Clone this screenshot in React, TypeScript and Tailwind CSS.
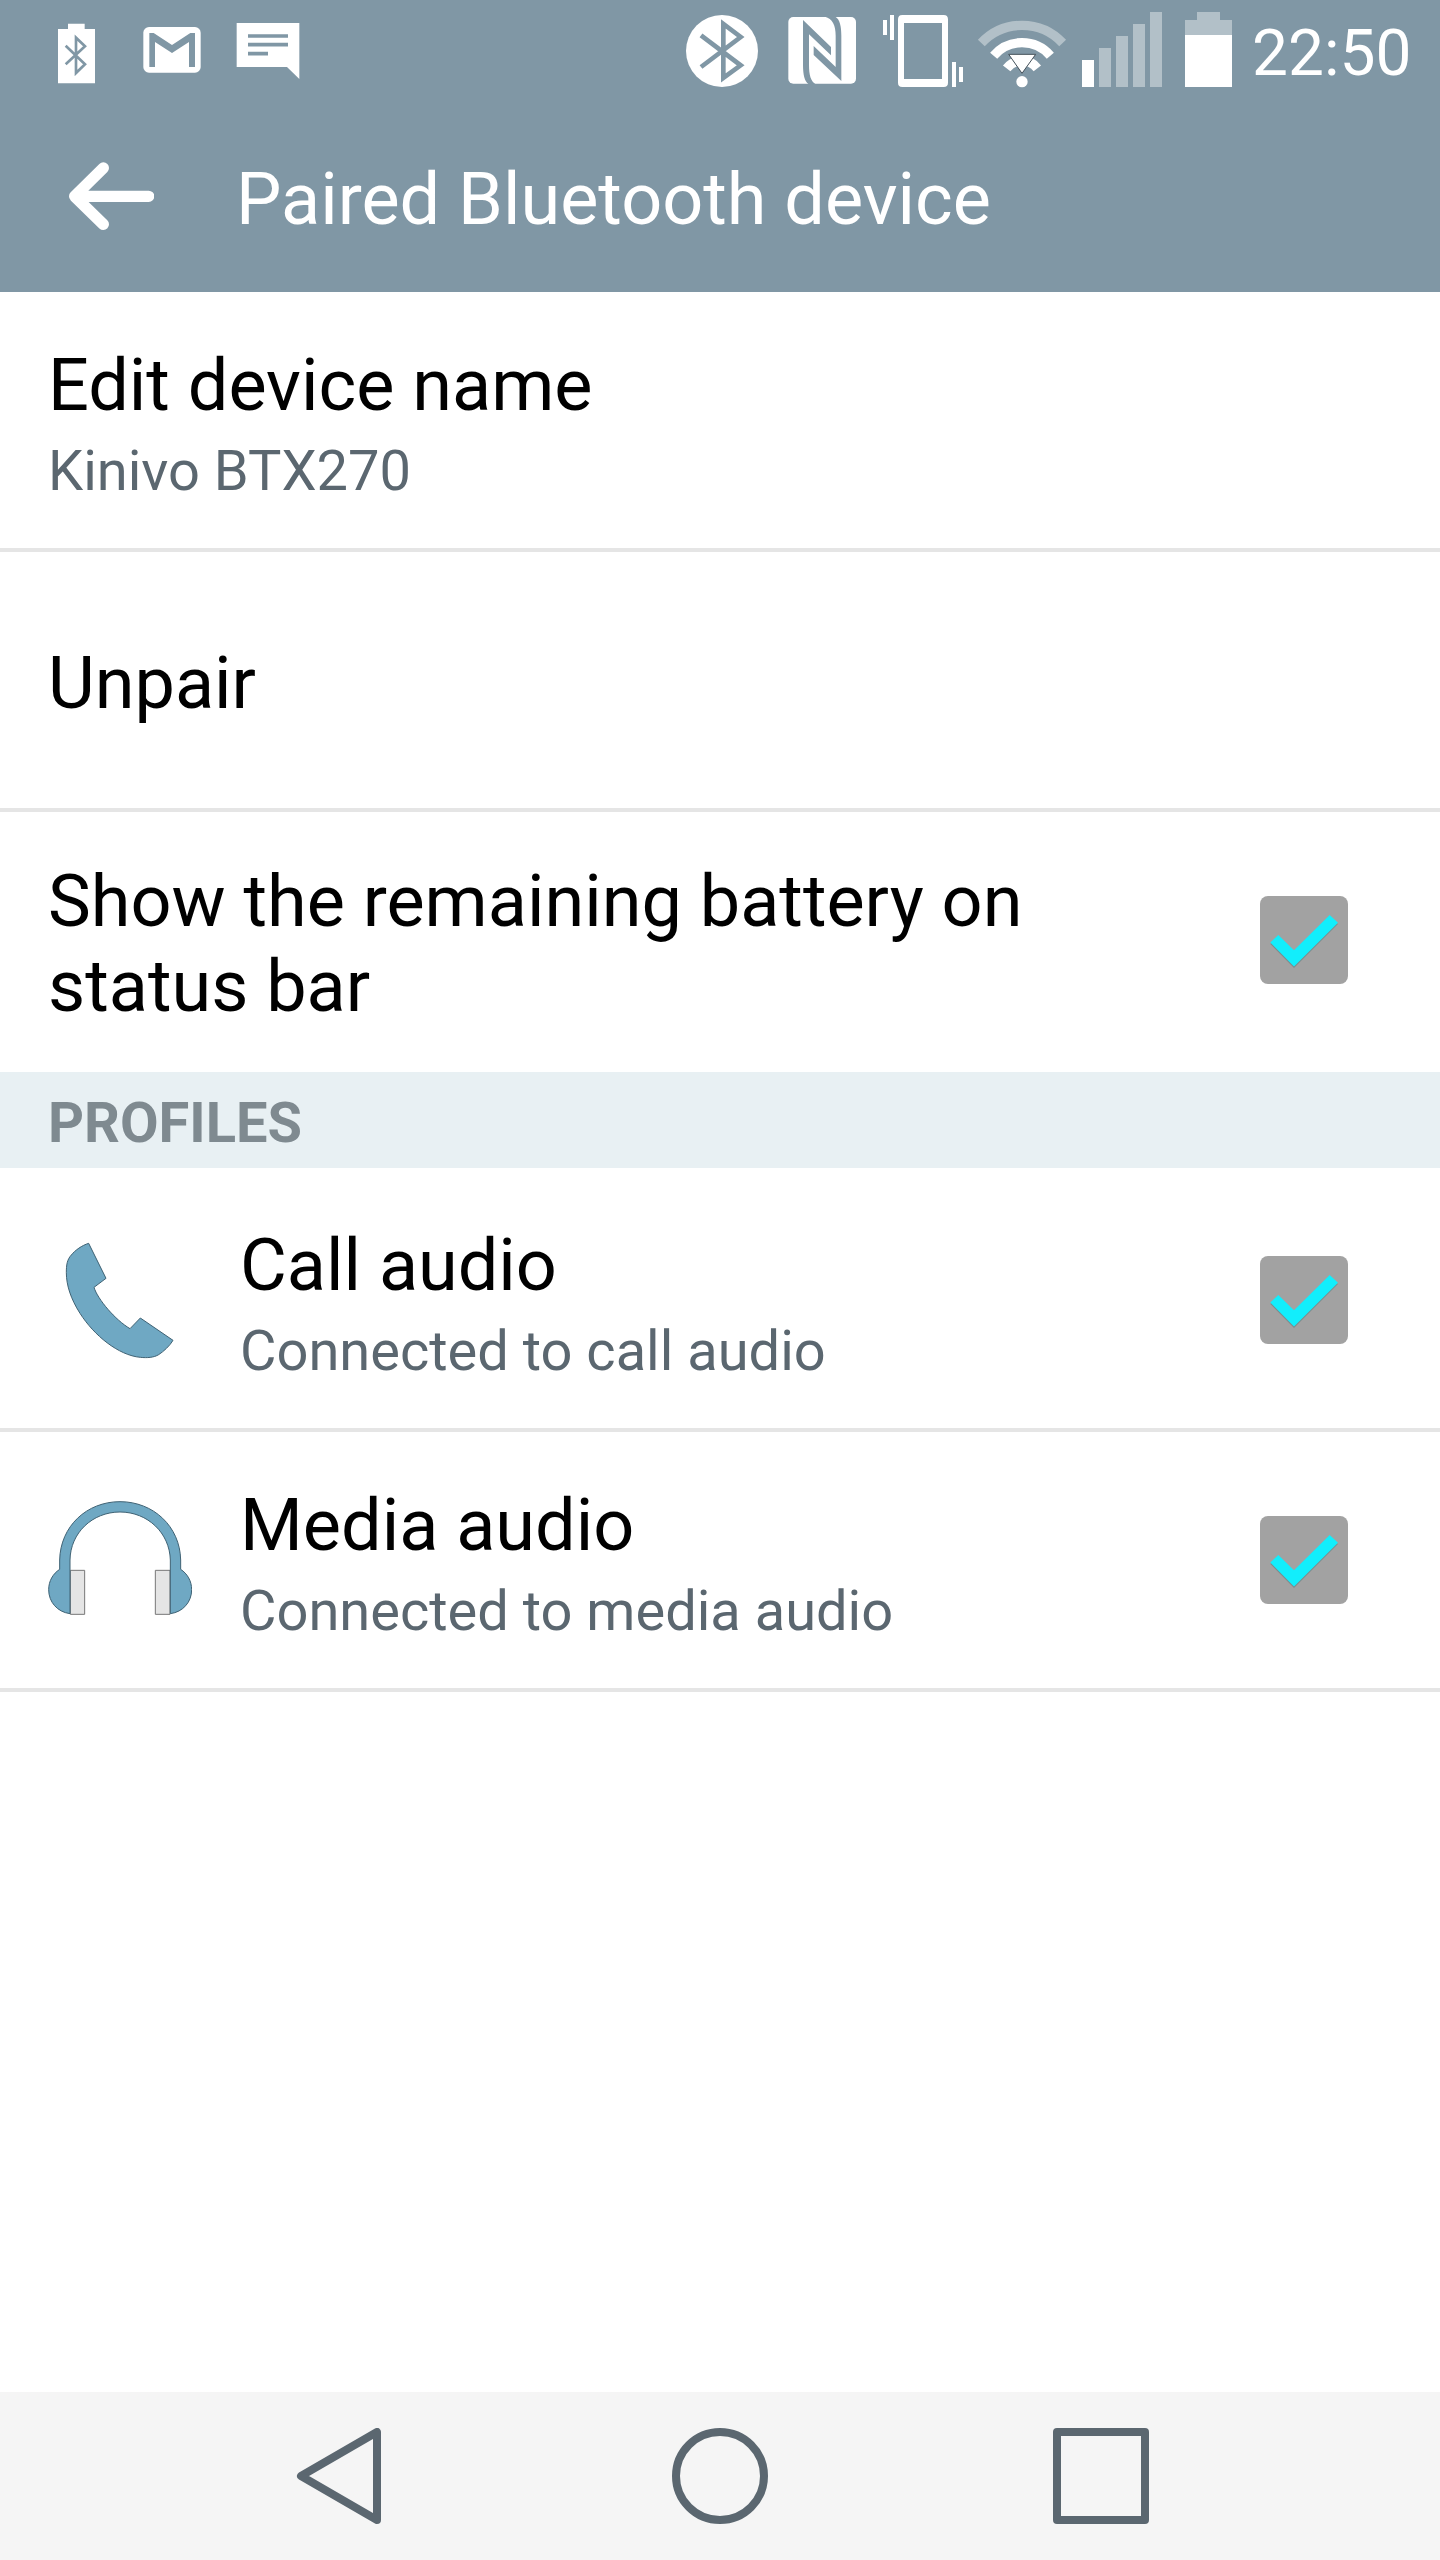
import type { ReactNode } from 'react';

const BAR = '#8097a5';

function StatusBar() {
  return (
    <div className="flex h-[100px] items-start pl-[58px]">
      {/* Notifications */}
      <svg className="h-[100px] w-[37px] shrink-0" viewBox="54 0 111 300">
        <path d="M54 87H84V71H134V87H165V250H54Z" fill="#fff" />
        <path d="M77 137L135 193L108 219V113L135 139L77 193" fill="none" stroke={BAR} strokeWidth="8" />
      </svg>
      <svg className="ml-12 h-[100px] w-[58px] shrink-0" viewBox="309 0 174 300">
        <rect x="310" y="81" width="172" height="137" rx="17" fill="#fff" />
        <path d="M328 201V99H341L396 135L451 99H465V201H447V126L396 159L345 126V201Z" fill={BAR} />
      </svg>
      <svg className="ml-[35px] h-[100px] w-16 shrink-0" viewBox="588 0 192 300">
        <path d="M590 69H778V237L741 201H590Z" fill="#fff" />
        <path d="M624 108H744M624 134H744M624 161H684" stroke={BAR} strokeWidth="11" />
      </svg>

      {/* System icons */}
      <svg className="ml-[386px] h-[100px] w-[72px] shrink-0" viewBox="48 0 216 300">
        <circle cx="156" cy="153" r="108" fill="#fff" />
        <path d="M93 106L212 196L160 234V72L212 111L93 201" fill="none" stroke={BAR} strokeWidth="14" />
      </svg>
      <svg className="ml-[30px] h-[100px] w-[68px] shrink-0" viewBox="354 0 204 300">
        <rect x="355" y="51" width="203" height="200" rx="15" fill="#fff" />
        <path d="M399 60L483 141V166L417 103V195C417 225 422 243 436 252H415C404 244 399 225 399 195Z" fill={BAR} />
        <path d="M514 243L431 165V138L497 201V107C497 75 487 56 465 50H496C510 58 514 80 514 107Z" fill={BAR} />
      </svg>
      <svg className="ml-[27px] h-[100px] w-20 shrink-0" viewBox="639 0 240 300">
        <path
          d="M697 45H821Q834 45 834 58V248Q834 261 821 261H697Q684 261 684 248V58Q684 45 697 45ZM702 69V237H816V69Z"
          fill="#fff"
          fillRule="evenodd"
        />
        <path d="M639 60H651V105H639ZM660 45H672V120H660ZM846 186H858V261H846ZM867 201H879V246H867Z" fill="#fff" />
      </svg>
      <svg className="ml-3.5 h-[100px] w-[90px] shrink-0" viewBox="51 0 270 300">
        <path d="M64 129A167 167 0 0 1 308 129" fill="none" stroke="#b2c0c8" strokeWidth="28" />
        <path d="M101 167A112 112 0 0 1 271 167" fill="none" stroke="#fff" strokeWidth="28" />
        <path d="M140 205A58 58 0 0 1 232 205" fill="none" stroke="#fff" strokeWidth="28" />
        <path d="M146 163H227L186 220Z" fill="#fff" stroke="#44515a" strokeWidth="3" strokeLinejoin="round" />
        <circle cx="186" cy="245" r="17" fill="#fff" />
      </svg>
      <svg className="ml-[15px] h-[100px] w-20 shrink-0" viewBox="366 0 240 300">
        <path d="M366 180H402V261H366Z" fill="#fff" />
        <path d="M417 144H453V261H417ZM468 108H504V261H468ZM519 72H555V261H519ZM570 36H606V261H570Z" fill="#b2c0c8" />
      </svg>
      <svg className="ml-[23px] h-[100px] w-[47px] shrink-0" viewBox="675 0 141 300">
        <path d="M675 60H711V36H780V60H816V105H675Z" fill="#b2c0c8" />
        <path d="M675 105H816V261H675Z" fill="#fff" />
      </svg>
      <span className="ml-5 pt-4 text-[64px] leading-[76px] text-white">22:50</span>
    </div>
  );
}

function AppBar() {
  return (
    <div className="flex h-48 items-start">
      <svg className="mt-[62px] ml-[69px] h-[68px] w-[85px] shrink-0" viewBox="87 66 255 204">
        <path
          d="M326 169H104M190 84L104 169L190 253"
          fill="none"
          stroke="#fff"
          strokeWidth="34"
          strokeLinecap="round"
          strokeLinejoin="round"
        />
      </svg>
      <h1 className="mt-[57px] ml-[82px] text-[72px] leading-[85px] text-white">Paired Bluetooth device</h1>
    </div>
  );
}

function Checkbox() {
  return (
    <svg className="mt-[84px] mr-[92px] h-[88px] w-[88px] shrink-0" viewBox="0 0 88 88">
      <rect width="88" height="88" rx="8" fill="#a2a2a2" />
      <path d="M10.3 48L18.3 40.3L34 55.6L69.7 20.3L78 28L34 72Z" fill="#7d8b8c" />
      <path d="M10.3 46.5L18.3 39L34 54.3L69.7 19L78 26.7L34 70.5Z" fill="#12eefc" />
    </svg>
  );
}

function PhoneIcon() {
  return (
    <svg className="h-36 w-36" viewBox="54 24 432 432">
      <path
        d="M176 70L228 175L192 202C203 238 256 300 300 326L331 294L429 361C420 377 400 395 386 404C371 413 351 414 331 412C265 406 192 346 150 280C122 236 109 195 109 158C109 135 111 119 124 105C135 91 156 76 176 70Z"
        fill="#6fa8c3"
        stroke="#3f6274"
        strokeWidth="3"
        strokeLinejoin="round"
      />
    </svg>
  );
}

function HeadphonesIcon() {
  return (
    <svg className="h-36 w-36" viewBox="54 24 432 432">
      <path d="M121 271H164V403H121ZM376 271H420V403H376Z" fill="#e5e5e5" stroke="#777" strokeWidth="3" />
      <path
        d="M120 401C82 396 56 366 56 329C56 303 69 281 89 268V240C91 139 170 65 270 65C370 65 450 139 452 240V268C472 281 485 303 485 329C485 366 459 396 421 401V240C419 159 353 96 270 96C187 96 121 159 120 240Z"
        fill="#6fa8c3"
        stroke="#3f6274"
        strokeWidth="3"
        strokeLinejoin="round"
      />
    </svg>
  );
}

interface ProfileRowProps {
  icon: ReactNode;
  title: string;
  summary: string;
}

function ProfileRow({ icon, title, summary }: ProfileRowProps) {
  return (
    <div className="flex h-[260px] items-start border-b-4 border-[#e5e5e5] pl-12">
      <div className="mt-14 shrink-0">{icon}</div>
      <div className="ml-12 grow pt-[51px]">
        <div className="text-[72px] leading-[85px] text-black">{title}</div>
        <div className="mt-2.5 text-[56px] leading-[66px] text-[#5b6770]">{summary}</div>
      </div>
      <Checkbox />
    </div>
  );
}

function NavBar() {
  return (
    <div className="flex h-[168px] items-center bg-[#f5f5f5] pl-[296px]">
      <svg className="h-24 w-[86px]" viewBox="48 144 258 288">
        <path d="M291 156V420L63 288Z" fill="none" stroke="#5b6770" strokeWidth="24" strokeLinejoin="round" />
      </svg>
      <div className="ml-[290px] h-24 w-24 rounded-full border-8 border-[#5b6770]" />
      <div className="ml-[285px] h-24 w-24 rounded-[4px] border-8 border-[#5b6770]" />
    </div>
  );
}

export default function App() {
  return (
    <div className="flex h-[2560px] w-[1440px] flex-col overflow-hidden bg-white font-['Roboto',sans-serif] whitespace-nowrap">
      <header className="bg-[#8097a5]">
        <StatusBar />
        <AppBar />
      </header>

      <main className="grow">
        <div className="h-[260px] border-b-4 border-[#e5e5e5] px-12 pt-[51px]">
          <div className="text-[72px] leading-[85px] text-black">Edit device name</div>
          <div className="mt-2.5 text-[56px] leading-[66px] text-[#5b6770]">Kinivo BTX270</div>
        </div>

        <div className="h-[260px] border-b-4 border-[#e5e5e5] px-12 pt-[89px]">
          <div className="text-[72px] leading-[85px] text-black">Unpair</div>
        </div>

        <div className="flex h-[260px] items-start justify-between pl-12">
          <div className="pt-[47px] text-[72px] leading-[85px] text-black">
            Show the remaining battery on
            <br />
            status bar
          </div>
          <Checkbox />
        </div>

        <div className="mb-1 h-24 bg-[#e8f0f3] px-12 pt-[18px] text-[56px] leading-[66px] font-bold text-[#7f8a90]">
          PROFILES
        </div>

        <ProfileRow icon={<PhoneIcon />} title="Call audio" summary="Connected to call audio" />
        <ProfileRow icon={<HeadphonesIcon />} title="Media audio" summary="Connected to media audio" />
      </main>

      <NavBar />
    </div>
  );
}
